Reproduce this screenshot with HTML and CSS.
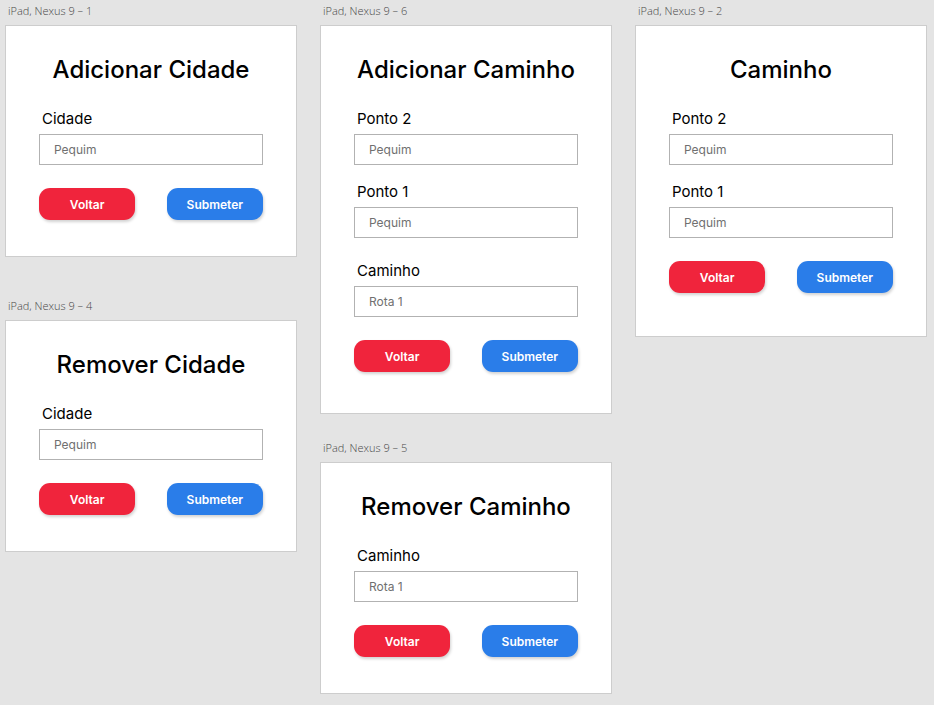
FILE: index.html
```html
<!DOCTYPE html>
<html lang="pt">
<head>
<meta charset="utf-8">
<meta name="viewport" content="width=device-width, initial-scale=1">
<title>Cidades e Caminhos</title>
<link rel="stylesheet" href="styles.css">
</head>
<body>
<main class="canvas">
  <div class="column column-loose">
    <section class="artboard">
      <p class="artboard-name">iPad, Nexus 9 – 1</p>
      <form class="card">
        <h2 class="title">Adicionar Cidade</h2>
        <div class="field">
          <label for="add-city">Cidade</label>
          <input id="add-city" type="text" placeholder="Pequim">
        </div>
        <div class="actions">
          <button class="btn btn-back" type="button">Voltar</button>
          <button class="btn btn-submit" type="button">Submeter</button>
        </div>
      </form>
    </section>
    <section class="artboard">
      <p class="artboard-name">iPad, Nexus 9 – 4</p>
      <form class="card">
        <h2 class="title">Remover Cidade</h2>
        <div class="field">
          <label for="remove-city">Cidade</label>
          <input id="remove-city" type="text" placeholder="Pequim">
        </div>
        <div class="actions">
          <button class="btn btn-back" type="button">Voltar</button>
          <button class="btn btn-submit" type="button">Submeter</button>
        </div>
      </form>
    </section>
  </div>

  <div class="column">
    <section class="artboard">
      <p class="artboard-name">iPad, Nexus 9 – 6</p>
      <form class="card card-route">
        <h2 class="title">Adicionar Caminho</h2>
        <div class="field">
          <label for="add-point-2">Ponto 2</label>
          <input id="add-point-2" type="text" placeholder="Pequim">
        </div>
        <div class="field">
          <label for="add-point-1">Ponto 1</label>
          <input id="add-point-1" type="text" placeholder="Pequim">
        </div>
        <div class="field field-route">
          <label for="add-route">Caminho</label>
          <input id="add-route" type="text" placeholder="Rota 1">
        </div>
        <div class="actions">
          <button class="btn btn-back" type="button">Voltar</button>
          <button class="btn btn-submit" type="button">Submeter</button>
        </div>
      </form>
    </section>
    <section class="artboard">
      <p class="artboard-name">iPad, Nexus 9 – 5</p>
      <form class="card">
        <h2 class="title">Remover Caminho</h2>
        <div class="field">
          <label for="remove-route">Caminho</label>
          <input id="remove-route" type="text" placeholder="Rota 1">
        </div>
        <div class="actions">
          <button class="btn btn-back" type="button">Voltar</button>
          <button class="btn btn-submit" type="button">Submeter</button>
        </div>
      </form>
    </section>
  </div>

  <div class="column">
    <section class="artboard">
      <p class="artboard-name">iPad, Nexus 9 – 2</p>
      <form class="card card-points">
        <h2 class="title">Caminho</h2>
        <div class="field">
          <label for="path-point-2">Ponto 2</label>
          <input id="path-point-2" type="text" placeholder="Pequim">
        </div>
        <div class="field">
          <label for="path-point-1">Ponto 1</label>
          <input id="path-point-1" type="text" placeholder="Pequim">
        </div>
        <div class="actions">
          <button class="btn btn-back" type="button">Voltar</button>
          <button class="btn btn-submit" type="button">Submeter</button>
        </div>
      </form>
    </section>
  </div>
</main>
</body>
</html>
```
FILE: styles.css
```css
* {
  box-sizing: border-box;
}

body {
  margin: 0;
  background: #e4e4e4;
  color: #000;
  font-family: Inter, "Open Sans", sans-serif;
}

.canvas {
  display: grid;
  grid-template-columns: repeat(3, minmax(0, 1fr));
  gap: 23px;
  padding: 3px 7px 8px 5px;
}

.column {
  display: flex;
  flex-direction: column;
  gap: 26px;
}

.column-loose {
  gap: 41px;
}

.artboard-name {
  margin: 0 0 6px;
  padding-left: 3px;
  color: #484848;
  font-family: "Open Sans", sans-serif;
  font-size: 11px;
  font-weight: 300;
  line-height: 16px;
}

.card {
  padding: 28px 33px 36px;
  border: 1px solid #cdcdcd;
  background: #fff;
}

.card-route {
  padding-bottom: 41px;
}

.card-points {
  padding-bottom: 43px;
}

.title {
  margin: 0 0 23px;
  font-size: 24px;
  font-weight: 500;
  line-height: 32px;
  text-align: center;
  white-space: nowrap;
}

.field {
  display: flex;
  flex-direction: column;
  gap: 5px;
}

.field + .field {
  margin-top: 17px;
}

.field + .field-route {
  margin-top: 23px;
}

.field label {
  padding-left: 3px;
  font-size: 15px;
  line-height: 20px;
}

.field input {
  width: 100%;
  height: 31px;
  padding: 0 14px;
  border: 1px solid #b2b2b2;
  border-radius: 0;
  background: #fff;
  color: #000;
  font-family: inherit;
  font-size: 12px;
}

.field input::placeholder {
  color: #707070;
  opacity: 1;
}

.actions {
  display: flex;
  justify-content: space-between;
  margin-top: 23px;
}

.btn {
  width: 43%;
  height: 32px;
  padding: 0;
  border: 0;
  border-radius: 11px;
  box-shadow: 1px 2px 3px rgba(0, 0, 0, 0.18);
  color: #fff;
  font-family: inherit;
  font-size: 12px;
  font-weight: 600;
}

.btn-back {
  background: #f0243c;
}

.btn-submit {
  background: #2a7de9;
}
```
